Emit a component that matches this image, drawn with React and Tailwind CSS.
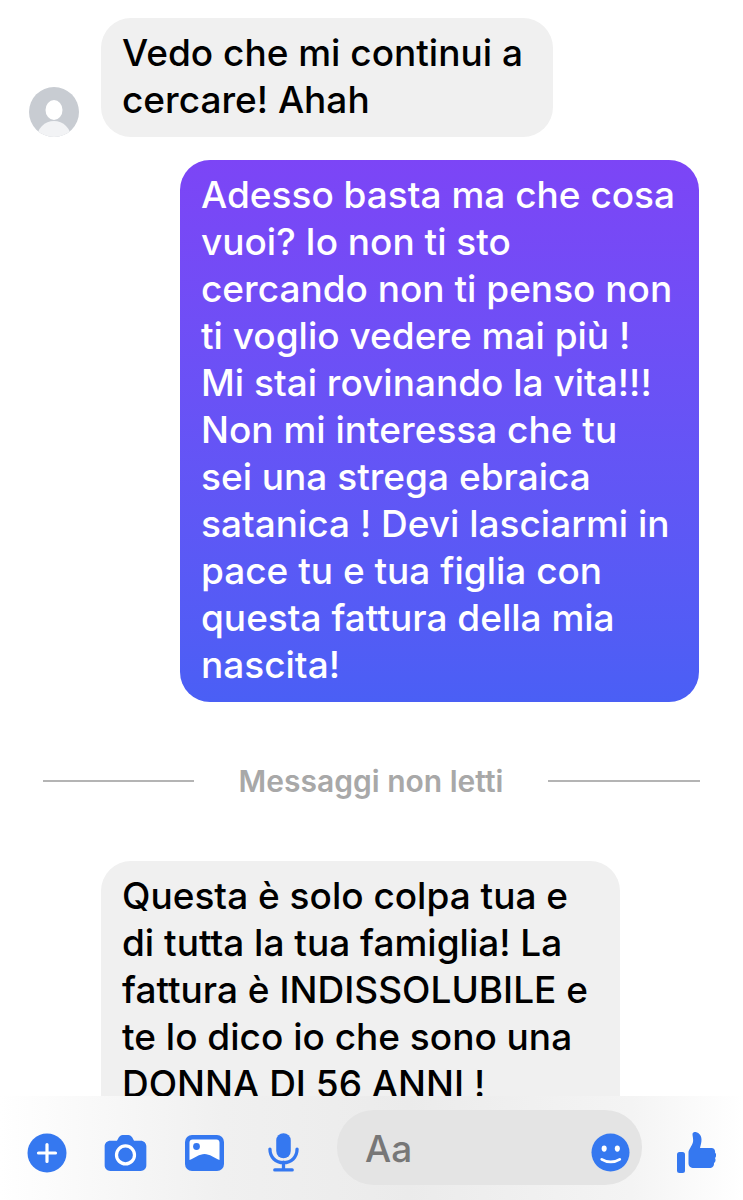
const F = { fontFamily: 'Inter, "Liberation Sans", sans-serif' };

function Plus() {
  return (
    <svg width="40" height="40" viewBox="0 0 40 40" className="block">
      <circle cx="20" cy="20" r="19.5" fill="#3578f0" />
      <path d="M20 11.500v17M11.500 20h17" stroke="#fff" strokeWidth="3.200" strokeLinecap="round" />
    </svg>
  );
}
function Camera() {
  return (
    <svg width="43" height="36" viewBox="0 0 44 38" className="block">
      <path d="M6 6h7l2-3.500C16 1 17 0 19 0h6c2 0 3 1 4 2.500L31 6h7c3.500 0 6 2.500 6 6v20c0 3.500-2.500 6-6 6H6c-3.500 0-6-2.500-6-6V12c0-3.500 2.500-6 6-6z" fill="#3578f0" />
      <circle cx="22" cy="21" r="9.500" fill="none" stroke="#fff" strokeWidth="3.400" />
    </svg>
  );
}
function Picture() {
  return (
    <svg width="39" height="36" viewBox="0 0 39 36" className="block">
      <rect width="39" height="36" rx="7" fill="#3578f0" />
      <path d="M4.500 7.500c0-1.700 1.300-3 3-3h24c1.700 0 3 1.300 3 3v17.500c-5-2-10-6-15-6s-10 4-15 6z" fill="#fff" />
      <circle cx="11.500" cy="11.500" r="3.400" fill="#3578f0" />
    </svg>
  );
}
function Mic() {
  return (
    <svg width="31" height="39" viewBox="0 0 32 40" className="block">
      <rect x="8.500" y="0" width="15" height="26" rx="7.500" fill="#3578f0" />
      <path d="M2 16.500c0 8.500 6 14 14 14s14-5.500 14-14" fill="none" stroke="#3578f0" strokeWidth="3.400" strokeLinecap="round" />
      <path d="M16 30v7M7 38h18" stroke="#3578f0" strokeWidth="3.400" strokeLinecap="round" />
    </svg>
  );
}
function Smile() {
  return (
    <svg width="39" height="39" viewBox="0 0 40 40" className="block">
      <circle cx="20" cy="20" r="19.500" fill="#3578f0" />
      <ellipse cx="13.500" cy="16" rx="2.600" ry="3.200" fill="#fff" />
      <ellipse cx="27" cy="16" rx="2.600" ry="3.200" fill="#fff" />
      <path d="M11 27c5.500 3.500 13 3.500 18.500 0" fill="none" stroke="#fff" strokeWidth="2.800" strokeLinecap="round" />
    </svg>
  );
}
function Thumb() {
  return (
    <svg width="39" height="41" viewBox="0 0 39 41" className="block">
      <rect x="0" y="20" width="8" height="21" rx="2.500" fill="#3578f0" />
      <path d="M17.500 0c3.500 0 7 2.500 7 7.500 0 3-.8 5.500-1.500 8.500h11.500c2.500 0 4 2 3.500 4.500 1.500 1.500 1.500 4 0 5.500 1 1.800.5 4-1 5 .3 2.500-1 4.500-3.500 5H17c-3.500 0-5.500-1.500-5.500-5V20.500c0-3 3.500-6.500 4.500-10.500.5-3-.5-5.500-.5-8 0-1 1-2 2-2z" fill="#3578f0" />
    </svg>
  );
}

function Bubble({ lines, className }) {
  return (
    <div className={className}>
      {lines.map((l, i) => (
        <div key={i} className="whitespace-nowrap">{l}</div>
      ))}
    </div>
  );
}

export default function App() {
  return (
    <div style={F} className="relative h-[1200px] w-[743px] overflow-hidden bg-white text-[37px] leading-[47px]">
      <div className="flex flex-col pt-[18px]">
        <div className="flex items-end pl-[29px]">
          <svg width="50" height="50" viewBox="0 0 50 50" className="mr-[22px]">
            <defs><clipPath id="av"><circle cx="25" cy="25" r="25" /></clipPath></defs>
            <g clipPath="url(#av)">
              <rect width="50" height="50" fill="#c8ccd2" />
              <ellipse cx="25" cy="23" rx="8.500" ry="10" fill="#fff" />
              <ellipse cx="25" cy="51" rx="17" ry="17" fill="#f2f3f5" />
            </g>
          </svg>
          <Bubble
            className="w-[452px] h-[119px] rounded-[30px] bg-[#f0f0f0] pl-[21px] pt-[11px] font-[550] text-black"
            lines={["Vedo che mi continui a", "cercare! Ahah"]}
          />
        </div>
        <div className="mt-[23px] flex justify-end pr-[44px]">
          <Bubble
            className="w-[519px] h-[542px] rounded-[30px] bg-gradient-to-b from-[#7c45f6] to-[#4a5ff5] pl-[21px] pt-[11px] font-medium text-white"
            lines={[
              "Adesso basta ma che cosa",
              "vuoi? Io non ti sto",
              "cercando non ti penso non",
              "ti voglio vedere mai più !",
              "Mi stai rovinando la vita!!!",
              "Non mi interessa che tu",
              "sei una strega ebraica",
              "satanica ! Devi lasciarmi in",
              "pace tu e tua figlia con",
              "questa fattura della mia",
              "nascita!",
            ]}
          />
        </div>
        <div className="mt-[57px] flex h-[44px] items-center pl-[43px] pr-[43px]">
          <div className="h-[2px] w-[151px] bg-[#b4b4b4]" />
          <div className="flex-1 text-center text-[30px] font-semibold text-[#a8a8a8]">Messaggi non letti</div>
          <div className="h-[2px] w-[152px] bg-[#b4b4b4]" />
        </div>
        <div className="mt-[58px] pl-[101px]">
          <Bubble
            className="w-[519px] h-[300px] rounded-[30px] bg-[#f0f0f0] pl-[21px] pt-[11px] font-[550] text-black"
            lines={[
              "Questa è solo colpa tua e",
              "di tutta la tua famiglia! La",
              "fattura è INDISSOLUBILE e",
              "te lo dico io che sono una",
              "DONNA DI 56 ANNI !",
            ]}
          />
        </div>
      </div>

      <div className="absolute bottom-0 left-0 flex h-[104px] w-full items-center bg-[linear-gradient(90deg,#ffffff_0%,#f0f0f0_30%,#ebebeb_55%,#f4f4f4_85%,#ffffff_100%)] pl-[27px]">
        <div className="mt-[9px] flex items-center">
          <Plus />
          <div className="ml-[37px]"><Camera /></div>
          <div className="ml-[38px]"><Picture /></div>
          <div className="ml-[44px]"><Mic /></div>
        </div>
        <div className="ml-[38px] mt-[-1px] flex h-[75px] w-[305px] items-center justify-between rounded-[37px] bg-[#e4e4e4] pl-[28px] pr-[12px]">
          <span className="mt-[1px] text-[37px] font-medium text-[#777777]">Aa</span>
          <div className="mt-[10px]"><Smile /></div>
        </div>
        <div className="ml-[35px] mt-[8px]"><Thumb /></div>
      </div>
    </div>
  );
}
